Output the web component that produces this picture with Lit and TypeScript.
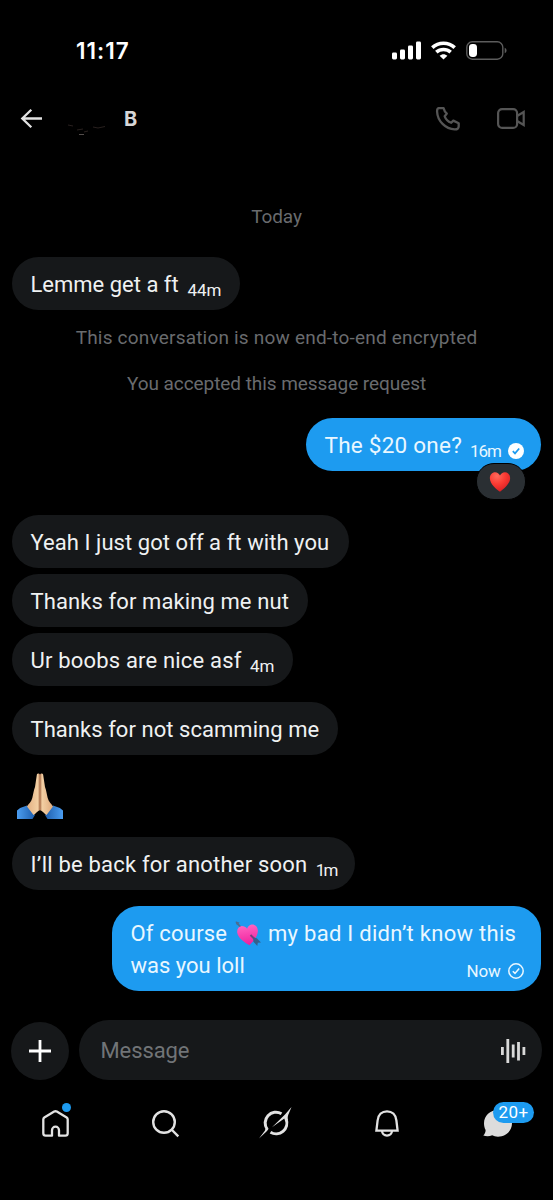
import { LitElement, html, css, svg } from "lit";
import { customElement } from "lit/decorators.js";

interface Msg {
  text: string;
  tracking: number;
  width: number;
  time?: string;
  timeTracking?: number;
}

const opening: Msg = { text: "Lemme get a ft", tracking: 0, width: 228, time: "44m" };
const batch: Msg[] = [
  { text: "Yeah I just got off a ft with you", tracking: 0.06, width: 337 },
  { text: "Thanks for making me nut", tracking: 0.1, width: 296 },
  { text: "Ur boobs are nice asf", tracking: 0.18, width: 281, time: "4m" },
];
const thanks: Msg = { text: "Thanks for not scamming me", tracking: 0.05, width: 326 };
const later: Msg = { text: "I’ll be back for another soon", tracking: 0.2, width: 343, time: "1m", timeTracking: -1.8 };

const heartPath =
  "M12 22.3C8.4 19.6 1.4 13.9 1.4 8C1.400 4.300 3.800 1.700 6.900 1.700C9.200 2 11 3.100 12 5.200C13 3.100 14.800 2 17.100 1.700C20.200 1.700 22.600 4.300 22.600 8C22.600 13.900 15.600 19.600 12 22.300Z";

@customElement("app-root")
export class AppRoot extends LitElement {
  static styles = css`
    :host { display: block; font-family: Roboto, "Liberation Sans", sans-serif; color: #e7e9ea; }
    * { box-sizing: border-box; }
    svg { display: block; overflow: visible; flex: none; }
    .screen { width: 553px; height: 1200px; background: #000; display: flex; flex-direction: column; overflow: hidden; }
    .status { height: 88px; padding: 13px 46px 0 76px; display: flex; align-items: center; justify-content: space-between; color: #fff; }
    .clock { font: 600 22.5px/26px Inter, sans-serif; letter-spacing: 1px; }
    .indicators { display: flex; align-items: center; gap: 10px; }
    .head { height: 62px; padding: 0 28px 0 20px; display: flex; align-items: center; }
    .avatar { margin-left: 22px; }
    .name { margin-left: 16px; font: 700 20px/26px Inter, sans-serif; color: #d6d6d6; flex: 1; }
    .calls { display: flex; align-items: center; gap: 37px; margin-top: -1px; }
    .thread { height: 841px; padding: 55px 12px 0; display: flex; flex-direction: column; align-items: flex-start; }
    .note { align-self: center; font-size: 19px; line-height: 24px; color: #696b6e; white-space: nowrap; }
    .day { margin-bottom: 28px; letter-spacing: -0.1px; }
    .encrypted { margin-top: 16px; letter-spacing: 0.2px; }
    .accepted { margin: 22px 0; letter-spacing: -0.06px; }
    .bubble { height: 53px; border-radius: 27px; background: #16181a; padding: 3px 18.5px 0 18.5px; display: flex; align-items: center; justify-content: space-between; white-space: nowrap; font-size: 22px; line-height: 30px; color: #eff1f2; flex: none; }
    .batch { display: flex; flex-direction: column; gap: 6px; margin: 44px 0 16px; }
    .time { font-size: 17px; line-height: 20px; padding-top: 10px; }
    .sent { align-self: flex-end; background: #1d9bf0; color: #e9f7ff; position: relative; padding: 1px 17px 0 18.5px; }
    .question { width: 235px; }
    .question .body { font-size: 22.5px; letter-spacing: 0.24px; }
    .question .time { letter-spacing: -1px; padding-top: 12px; }
    .meta { display: flex; align-items: center; gap: 7.500px; }
    .question .meta { margin-left: 1px; }
    .question .time { margin-right: -0.5px; }
    .tick { margin-top: 12px; }
    .react { position: absolute; right: 15.5px; top: 45px; width: 50px; height: 37px; border: 1.5px solid #000; border-radius: 18px; background: #2a2f33; padding: 6.5px 0 0 12.5px; }
    .emoji { height: 82px; padding: 18px 5px; }
    .long { margin-top: 16px; height: 85px; width: 429px; flex-direction: column; align-items: stretch; padding: 12px 17px 0 18.5px; justify-content: flex-start; }
    .line { height: 32px; line-height: 32px; display: flex; align-items: center; }
    .line .a { width: 104.5px; letter-spacing: 0.2px; }
    .line .b { margin-left: 7px; letter-spacing: 0.28px; }
    .line .c { flex: 1; }
    .line .time { line-height: 20px; padding-top: 10px; letter-spacing: -0.2px; }
    .line .tick { margin-top: 10px; }
    .composer { height: 79px; margin-top: 19px; display: flex; padding: 0 11px 0 10.5px; align-items: center; gap: 10.5px; }
    .plus { width: 58px; height: 58px; border-radius: 50%; background: #16181a; display: grid; place-items: center; margin-top: 2px; }
    .field { flex: 1; height: 60px; border-radius: 30px; background: #16181a; padding: 2px 16px 0 21.5px; display: flex; align-items: center; justify-content: space-between; color: #717477; font-size: 22px; letter-spacing: -0.1px; }
    .nav { display: flex; padding-top: 9px; }
    .tab { flex: 1; height: 50px; display: flex; justify-content: center; align-items: center; position: relative; }
    .dot { position: absolute; left: 61.5px; top: 4.5px; width: 9px; height: 9px; border-radius: 50%; background: #1d9bf0; }
    .badge { position: absolute; left: 50.6px; top: 4px; width: 41px; height: 21px; border-radius: 11px; background: #1d9bf0; color: #fff; font-size: 17px; line-height: 21px; text-align: center; letter-spacing: 0.4px; }
  `;

  bubble(m: Msg) {
    return html`<div class="bubble" style="width:${m.width}px">
      <span style="letter-spacing:${m.tracking}px">${m.text}</span>
      ${m.time ? html`<span class="time" style="letter-spacing:${m.timeTracking ?? 0}px">${m.time}</span>` : ""}
    </div>`;
  }

  heart() {
    return html`<svg width="22" height="22" viewBox="0.500 0.500 23 23">
      <defs><radialGradient id="red" cx=".35" cy=".2" r=".9"><stop offset="0" stop-color="#ff6a5c"/><stop offset=".45" stop-color="#fb3b33"/><stop offset="1" stop-color="#cf1820"/></radialGradient></defs>
      <path d=${heartPath} fill="url(#red)"/></svg>`;
  }

  cupid() {
    return html`<svg width="26" height="26" viewBox="0 0 26 26">
      <defs><linearGradient id="pink" x1="0" y1="0" x2="0" y2="1"><stop offset="0" stop-color="#ff62c0"/><stop offset="1" stop-color="#ee1f9c"/></linearGradient></defs>
      <path d="M1.200 1.200L6 6.500" stroke="#4a6c93" stroke-width="1.800"/><path d="M.6.4L4.600 1.600L2 4.200Z" fill="#4a6c93"/>
      <g transform="translate(1.200 2.600) rotate(-8 11 11) scale(.98)"><path d=${heartPath} fill="url(#pink)"/></g>
      <path d="M15.500 14L21 19.500" stroke="#73407f" stroke-width="2"/>
      <path d="M18.300 16.400L21.800 17.300L26 21.600L22.800 21.800L22.300 25L18.400 20.700Z" fill="#34608c"/></svg>`;
  }

  hands() {
    return svg`<svg width="46" height="46" viewBox="0 0 46 46">
      <defs>
        <linearGradient id="skin" x1="0" x2="1"><stop offset="0" stop-color="#e3b184"/><stop offset=".42" stop-color="#f3cfa3"/><stop offset=".5" stop-color="#a96d48"/><stop offset=".58" stop-color="#f3cfa3"/><stop offset="1" stop-color="#dfaa7d"/></linearGradient>
        <linearGradient id="sleeve" x1="0" x2="1"><stop offset="0" stop-color="#4b9df0"/><stop offset=".38" stop-color="#1f5fae"/><stop offset=".62" stop-color="#1f5fae"/><stop offset="1" stop-color="#4b9df0"/></linearGradient>
      </defs>
      <path d="M0 37.500Q4 34 10 32.500L18 42L15.500 46H0ZM46 37.500Q42 34 36 32.500L28 42L30.500 46H46Z" fill="url(#sleeve)"/>
      <path d="M23 1.500C22.200 0 20 .2 19.800 2L18 14C16.700 17 16.300 21 15.300 25C14.500 28.500 11.500 31 10 33.500L16.500 42C19 40.500 20.500 37.500 23 37.200C25.500 37.500 27 40.500 29.500 42L36 33.500C34.500 31 31.500 28.500 30.700 25C29.700 21 29.300 17 28 14L26.200 2C26 .2 23.800 0 23 1.500Z" fill="url(#skin)"/>
    </svg>`;
  }

  render() {
    return html`<main class="screen">
      <div class="status">
        <span class="clock">11:17</span>
        <div class="indicators">
          <svg width="29" height="19" viewBox="0 0 29 19" fill="#fff"><rect x="0" y="11.500" width="5" height="7" rx="1.400"/><rect x="8" y="8.500" width="5" height="10" rx="1.400"/><rect x="16" y="4.500" width="5" height="14" rx="1.400"/><rect x="24" y="0.500" width="5" height="18" rx="1.400"/></svg>
          <svg width="25" height="19" viewBox="0 0 25 19" fill="none" stroke="#fff" stroke-width="3.600"><path d="M1.300 6.600C7.500.8 17.500.8 23.700 6.600"/><path d="M5.300 11.200C9.400 7.600 15.600 7.600 19.700 11.200"/><path d="M12.500 18.500L8.600 14.700C11 12.600 14 12.600 16.400 14.700Z" fill="#fff" stroke="none"/></svg>
          <svg width="41" height="19" viewBox="0 0 41 19"><rect x=".8" y=".8" width="36" height="17.400" rx="5.500" fill="none" stroke="#5c5c5c" stroke-width="1.400"/><rect x="3" y="3" width="8" height="13" rx="3.400" fill="#fff"/><path d="M38.700 6.800C41.200 8 41.200 11 38.700 12.200Z" fill="#5c5c5c"/></svg>
        </div>
      </div>
      <header class="head">
        <svg width="23" height="20" viewBox="0 0 23 20" fill="none" stroke="#e2e2e2" stroke-width="2.300"><path d="M22 9.500H2M11.300 .7L2.300 9.500L11.300 18.300"/></svg>
        <svg class="avatar" width="43" height="40" viewBox="0 0 43 40" fill="none" stroke-width=".9"><path d="M3 26l5 1M12 31l6-1M28 28l5 1 7-1.500M19 33l4-1" stroke="#2c2421"/><path d="M14 35.500h5" stroke="#5c5654"/></svg>
        <span class="name">B</span>
        <div class="calls">
          <svg width="24" height="24" viewBox="0 0 24 24" fill="none" stroke="#555" stroke-width="2.300" stroke-linejoin="round"><path d="M2.600 1.200H7.600Q8.300 4.200 10.800 6.600L8.700 9.300C9.700 12 12.500 14.700 15.200 15.800L17.300 13.600L22.700 16.300V19.200C22.700 21.600 21.200 22.500 18.700 22.400C9.500 21.900 1.500 14 1.100 4.700C1 2.800 1.400 1.400 2.600 1.200Z"/></svg>
          <svg width="28" height="21" viewBox="0 0 28 21" fill="none" stroke="#555" stroke-width="2.200"><rect x="1.100" y="1.100" width="19" height="18.800" rx="4"/><path d="M20.500 7.800L26.700 4V17L20.500 13.200"/></svg>
        </div>
      </header>
      <section class="thread">
        <div class="note day">Today</div>
        ${this.bubble(opening)}
        <div class="note encrypted">This conversation is now end-to-end encrypted</div>
        <div class="note accepted">You accepted this message request</div>
        <div class="bubble sent question">
          <span class="body">The $20 one?</span>
          <span class="meta"><span class="time">16m</span><svg class="tick" width="16" height="16" viewBox="0 0 16 16"><circle cx="8" cy="8" r="8" fill="#fff"/><path d="M4.800 8.200L7 10.400L11.200 5.500" stroke="#1d9bf0" stroke-width="1.700" fill="none"/></svg></span>
          <div class="react">${this.heart()}</div>
        </div>
        <div class="batch">${batch.map((m) => this.bubble(m))}</div>
        ${this.bubble(thanks)}
        <div class="emoji">${this.hands()}</div>
        ${this.bubble(later)}
        <div class="bubble sent long">
          <div class="line"><span class="a">Of course</span>${this.cupid()}<span class="b">my bad I didn’t know this</span></div>
          <div class="line"><span class="c">was you loll</span><span class="meta"><span class="time">Now</span><svg class="tick" width="16" height="16" viewBox="0 0 16 16" fill="none" stroke="#e9f7ff"><circle cx="8" cy="8" r="7.200" stroke-width="1.500"/><path d="M4.800 8.200L7 10.400L11.200 5.500" stroke-width="1.600"/></svg></span></div>
        </div>
      </section>
      <div class="composer">
        <div class="plus"><svg width="22" height="22" viewBox="0 0 22 22" stroke="#fff" stroke-width="2.800"><path d="M11 0V22M0 11H22"/></svg></div>
        <div class="field"><span>Message</span>
          <svg width="25" height="24" viewBox="0 0 25 24" fill="#d9d9d9"><rect y="8" width="2.800" height="8"/><rect x="5.400" width="2.800" height="24"/><rect x="10.800" y="5.500" width="2.800" height="13"/><rect x="16.100" y="3" width="2.800" height="18.500"/><rect x="21.500" y="8" width="2.800" height="8"/></svg></div>
      </div>
      <nav class="nav">
        <div class="tab"><svg width="27" height="27" viewBox="0 0 27 27" fill="none" stroke="#e2e2e2" stroke-width="2.300"><path d="M10 25.700H3.700Q1.300 25.700 1.300 23.300V9.400Q1.300 8.200 2.300 7.500L12.200 1.600Q13.500 .9 14.800 1.600L24.700 7.500Q25.700 8.200 25.700 9.400V23.300Q25.700 25.700 23.300 25.700H17V20.200A3.500 3.500 0 0 0 10 20.200Z" stroke-linejoin="round"/></svg><i class="dot"></i></div>
        <div class="tab"><svg width="27" height="27" viewBox="0 0 27 27" fill="none" stroke="#e2e2e2" stroke-width="2.400"><circle cx="12" cy="12" r="10.800"/><path d="M19.500 19.500L26.300 26.300"/></svg></div>
        <div class="tab"><svg width="32" height="32" viewBox="0 0 32 32" fill="#e2e2e2"><g fill="none" stroke="#e2e2e2" stroke-width="3"><path d="M21.500 6.700A10.800 10.800 0 0 0 7.200 22.300"/><path d="M26.200 12.300A10.800 10.800 0 0 1 10.500 25.300"/></g><path d="M12 20.300L25 7.500L31.500 0L28.200 8Q27.400 10 27.800 13L25 13.500L24.300 11.500L12 20.300Z"/><path d="M-1 31.500L3.500 25.500Q5.200 23.500 5.500 22L8.500 21.500Q8.500 22.500 6.500 24.500Z"/></svg></div>
        <div class="tab"><svg width="24" height="27" viewBox="0 0 24 27" fill="none" stroke="#e2e2e2" stroke-width="2.300"><path d="M1.400 20.600H22.600L21.400 10.500C20.800 4.500 17 1.300 12 1.300C7 1.300 3.200 4.500 2.600 10.500Z"/><path d="M7 20.600A5 5 0 0 0 17 20.600"/></svg></div>
        <div class="tab"><svg width="29" height="27" viewBox="0 0 29 27" fill="#dcdcdc"><path d="M15 0C22.800 0 29 5.800 29 13.300C29 20.800 22.800 26.700 15 26.700C12.500 26.700 10.800 26.200 9.200 25.300C6.500 26.500 3 26.500 .3 25.500C2 23.800 2.600 22 2.600 20C1.500 18 1 15.800 1 13.300C1 5.800 7.200 0 15 0Z"/></svg><span class="badge">20+</span></div>
      </nav>
    </main>`;
  }
}
